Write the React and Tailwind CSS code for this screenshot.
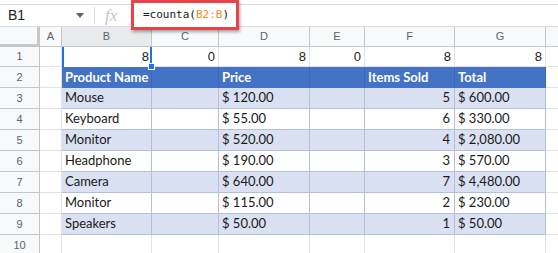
import React from 'react';

const cols = [
  { label: 'A', w: 22 },
  { label: 'B', w: 90 },
  { label: 'C', w: 67 },
  { label: 'D', w: 91 },
  { label: 'E', w: 55 },
  { label: 'F', w: 90 },
  { label: 'G', w: 91 },
];

const data = [
  ['Mouse', '$ 120.00', '5', '$ 600.00'],
  ['Keyboard', '$ 55.00', '6', '$ 330.00'],
  ['Monitor', '$ 520.00', '4', '$ 2,080.00'],
  ['Headphone', '$ 190.00', '3', '$ 570.00'],
  ['Camera', '$ 640.00', '7', '$ 4,480.00'],
  ['Monitor', '$ 115.00', '2', '$ 230.00'],
  ['Speakers', '$ 50.00', '1', '$ 50.00'],
];

const gridCols = 'grid-cols-[40px_22px_90px_67px_91px_55px_90px_91px_1fr]';

function RowHead({ n, h }) {
  return (
    <div className={`${h} flex items-center justify-center bg-[#f8f9fa] border-r border-b border-[#c4c7c5] text-[11px] text-[#5f6368]`}>
      {n}
    </div>
  );
}

export default function App() {
  return (
    <div className="w-[558px] h-[253px] overflow-hidden bg-white font-['Liberation_Sans',Arial,sans-serif] text-[13px] text-[#202124]">
      {/* formula bar */}
      <div className="h-[23px] mt-[4px] border-t border-b border-[#dadce0] flex items-center relative">
        <div className="w-[95px] flex items-center justify-between pl-[8px] pr-[10px] text-[14px] border-r border-[#dadce0] h-[17px]">
          <span>B1</span>
          <svg width="8" height="5" viewBox="0 0 8 5"><path d="M0 0h8L4 5z" fill="#5f6368" /></svg>
        </div>
        <span className="ml-[10px] font-['Liberation_Serif',serif] italic text-[17px] text-[#c4c7c5]">fx</span>
        <div className="absolute left-[131px] top-[-5px] w-[108px] h-[30px] border-[3px] border-[#e9434a] shadow-[1px_2px_3px_rgba(0,0,0,0.35)] bg-white flex items-center pl-[9px] font-['DejaVu_Sans_Mono',monospace] text-[11px] whitespace-nowrap">
          =counta(<span className="text-[#f28b22]">B2:B</span>)
        </div>
      </div>

      <div className={`grid ${gridCols}`}>
        {/* column headers */}
        <div className="h-[20px] bg-[#f8f9fa] border-r-[3px] border-b-[3px] border-[#c4c7c5]" />
        {cols.map((c) => (
          <div
            key={c.label}
            className={`h-[20px] flex items-center justify-center text-[11px] text-[#5f6368] border-r border-b border-[#c4c7c5] ${c.label === 'B' ? 'bg-[#e8eaed]' : 'bg-[#f8f9fa]'}`}
          >
            {c.label}
          </div>
        ))}
        <div className="h-[20px] bg-[#f8f9fa] border-b border-[#c4c7c5]" />

        {/* row 1 */}
        <RowHead n="1" h="h-[20px] bg-[#e8eaed]" />
        <div className="h-[20px] border-r border-b border-[#e2e2e2]" />
        <div className="h-[20px] relative border-l-2 border-r-2 border-[#1a73e8] flex items-center justify-end pr-[1px]">
          8
          <div className="absolute right-[-5px] bottom-[-3px] w-[7px] h-[7px] bg-[#1a73e8] border border-white z-10" />
        </div>
        <div className="h-[20px] border-r border-b border-[#e2e2e2] flex items-center justify-end pr-[3px]">0</div>
        <div className="h-[20px] border-r border-b border-[#e2e2e2] flex items-center justify-end pr-[3px]">8</div>
        <div className="h-[20px] border-r border-b border-[#e2e2e2] flex items-center justify-end pr-[3px]">0</div>
        <div className="h-[20px] border-r border-b border-[#e2e2e2] flex items-center justify-end pr-[3px]">8</div>
        <div className="h-[20px] border-r border-b border-[#e2e2e2] flex items-center justify-end pr-[3px]">8</div>
        <div className="h-[20px] border-b border-[#e2e2e2]" />

        {/* row 2 header */}
        <RowHead n="2" h="h-[21px]" />
        <div className="h-[21px] border-r border-b border-[#e2e2e2]" />
        {['Product Name', '', 'Price', '', 'Items Sold', 'Total'].map((t, i) => (
          <div
            key={i}
            className="h-[21px] bg-[#4472c4] text-white font-bold font-['Lato',sans-serif] text-[13px] whitespace-nowrap flex items-center border-r border-[#3f67b0] pl-[3px]"
          >
            {t}
          </div>
        ))}
        <div className="h-[21px] border-b border-[#e2e2e2]" />

        {data.map((r, i) => {
          const bg = i % 2 === 0 ? 'bg-[#d9e1f2]' : 'bg-white';
          const cell = `h-[21px] ${bg} border-r border-b border-[#b4c0da] font-['Lato',sans-serif] text-[13px] text-[#1a1a1a] whitespace-nowrap flex items-center`;
          return (
            <React.Fragment key={i}>
              <RowHead n={i + 3} h="h-[21px]" />
              <div className="h-[21px] border-r border-b border-[#e2e2e2]" />
              <div className={`${cell} pl-[3px]`}>{r[0]}</div>
              <div className={cell} />
              <div className={`${cell} pl-[3px]`}>{r[1]}</div>
              <div className={cell} />
              <div className={`${cell} justify-end pr-[4px]`}>{r[2]}</div>
              <div className={`${cell} pl-[3px]`}>{r[3]}</div>
              <div className="h-[21px] border-b border-[#e2e2e2]" />
            </React.Fragment>
          );
        })}

        {/* row 10 */}
        <RowHead n="10" h="h-[21px]" />
        {cols.map((c) => (
          <div key={c.label} className="h-[21px] border-r border-b border-[#e2e2e2]" />
        ))}
        <div className="h-[21px] border-b border-[#e2e2e2]" />
      </div>
    </div>
  );
}
